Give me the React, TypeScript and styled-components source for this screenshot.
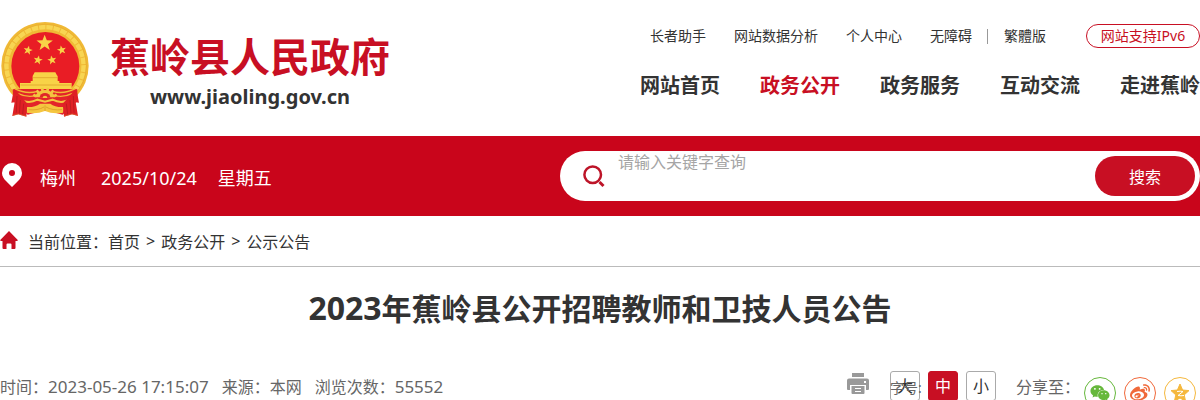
import React from "react";
import styled, { createGlobalStyle } from "styled-components";
import { FaWeibo, FaWeixin } from "react-icons/fa";

const RED = "#c80f23";

const GlobalStyle = createGlobalStyle`
  * { box-sizing: border-box; }
  html { scrollbar-width: none; }
  body {
    margin: 0;
    background: #fff;
    color: #333;
    font-family: "Noto Sans", "Noto Sans CJK SC", sans-serif;
    font-size: 16px;
  }
  a { color: inherit; text-decoration: none; }
  button, input { font-family: inherit; }
`;

const Header = styled.header`
  display: flex;
  justify-content: space-between;
  height: 136px;
`;

const Brand = styled.a`
  display: flex;
  gap: 21px;
  padding: 22px 0 0 1px;
`;

const BrandText = styled.div`
  display: flex;
  flex-direction: column;
  align-items: center;
  padding-top: 10px;
`;

const SiteName = styled.span`
  color: ${RED};
  font-size: 40px;
  font-weight: 700;
  line-height: 50px;
  white-space: nowrap;
`;

const Domain = styled.span`
  font-size: 20px;
  font-weight: 700;
  line-height: 30px;
`;

const Navs = styled.div`
  display: flex;
  flex-direction: column;
  align-items: flex-end;
  padding-top: 24px;
  white-space: nowrap;
`;

const TopNav = styled.nav`
  display: flex;
  align-items: center;
  font-size: 14px;
  line-height: 24px;
`;

const TopLink = styled.a<{ $gap?: number }>`
  margin-right: ${(p) => p.$gap ?? 28}px;
`;

const Divider = styled.span`
  width: 1px;
  height: 15px;
  margin-right: 16px;
  background: #999;
`;

const Ipv6 = styled.a`
  width: 114px;
  height: 24px;
  border: 1px solid ${RED};
  border-radius: 12px;
  color: ${RED};
  line-height: 22px;
  text-align: center;
`;

const MainNav = styled.nav`
  display: flex;
  gap: 40px;
  padding-top: 23px;
  font-size: 20px;
  font-weight: 700;
  line-height: 30px;
`;

const MainLink = styled.a<{ $active?: boolean }>`
  color: ${(p) => (p.$active ? RED : "#333")};
`;

const Band = styled.section`
  display: flex;
  align-items: center;
  justify-content: space-between;
  height: 80px;
  background: #c9051b;
  color: #fff;
`;

const Today = styled.div`
  display: flex;
  align-items: center;
  padding: 4px 0 0 2px;
  font-size: 18px;
  line-height: 28px;
  white-space: nowrap;

  svg { margin: 0 18px 6px 0; }
`;

const City = styled.span`
  margin-right: 25px;
`;

const Day = styled.time`
  margin-right: 21px;
`;

const Search = styled.form`
  display: flex;
  align-items: center;
  width: 640px;
  height: 50px;
  padding: 0 5px 0 22px;
  border-radius: 25px;
  background: #fff;
`;

const SearchInput = styled.input`
  flex: 1;
  height: 50px;
  min-width: 0;
  margin-left: 12px;
  padding: 0 0 28px;
  border: 0;
  outline: 0;
  background: transparent;
  font-size: 16px;
  line-height: 24px;
  &::placeholder { color: #a5a5a5; }
`;

const SearchButton = styled.button`
  width: 100px;
  height: 40px;
  border: 0;
  border-radius: 20px;
  background: ${RED};
  color: #fff;
  font-size: 16px;
`;

const Crumbs = styled.nav`
  display: flex;
  align-items: center;
  gap: 6px;
  height: 51px;
  border-bottom: 1px solid #bbb;
  white-space: nowrap;

  svg { margin: 0 4px 3px 0; }
`;

const CrumbLabel = styled.span`
  margin-right: -6px;
`;

const Title = styled.h1`
  margin: 0;
  padding-top: 19px;
  font-size: 30px;
  font-weight: 700;
  line-height: 44px;
  text-align: center;
`;

const Year = styled.span`
  font-size: 32px;
`;

const Info = styled.div`
  display: flex;
  justify-content: space-between;
  padding-top: 40px;
  color: #666;
  white-space: nowrap;
`;

const Facts = styled.div`
  display: flex;
  gap: 13px;
  padding-top: 4px;
  line-height: 24px;
`;

const Figure = styled.span`
  font-size: 17px;
`;

const Tools = styled.div`
  display: flex;
  align-items: flex-start;
`;

const PrintButton = styled.button`
  margin: 2px 21px 0 0;
  padding: 0;
  border: 0;
  background: none;
  line-height: 0;
`;

const Sizes = styled.div`
  position: relative;
  display: flex;
  gap: 8px;
  margin-right: 20px;
`;

const SizeLabel = styled.span`
  position: absolute;
  top: 7px;
  left: 0;
  font-size: 14px;
  line-height: 20px;
`;

const SizeButton = styled.button<{ $active?: boolean }>`
  width: 30px;
  height: 30px;
  padding: 0;
  border: 1px solid ${(p) => (p.$active ? RED : "#aaa")};
  border-radius: 3px;
  background: ${(p) => (p.$active ? RED : "#fff")};
  color: ${(p) => (p.$active ? "#fff" : "#333")};
  font-size: 16px;
  line-height: 28px;
`;

const ShareLabel = styled.span`
  padding-top: 4px;
  line-height: 24px;
`;

const Shares = styled.div`
  display: flex;
  gap: 8px;
  padding: 6px 4px 0 4px;
`;

const ShareLink = styled.a<{ $color: string }>`
  display: flex;
  align-items: center;
  justify-content: center;
  width: 32px;
  height: 32px;
  border: 1px solid ${(p) => p.$color};
  border-radius: 50%;
  color: ${(p) => p.$color};
`;

const STAR = "0,-10 2.6,-3.2 9.8,-3 4,1.4 6.1,8.4 0,4.3 -6.1,8.4 -4,1.4 -9.8,-3 -2.6,-3.2";

const Emblem = () => (
  <svg width="88" height="96" viewBox="3 36 264 288" aria-hidden="true">
    <circle cx="135" cy="167" r="131" fill="#f0b935" />
    <circle cx="135" cy="167" r="116" fill="none" stroke="#f8d552" strokeWidth="14" strokeDasharray="19 3" />
    <circle cx="135" cy="167" r="124" fill="none" stroke="#e5a92d" strokeWidth="2" />
    <circle cx="136" cy="168" r="102" fill="#e91d25" />
    <g fill="#f8d347">
      <polygon points={STAR} transform="translate(134 99) scale(2.5)" />
      <polygon points={STAR} transform="translate(84 121) scale(1.4) rotate(12)" />
      <polygon points={STAR} transform="translate(185 120) scale(1.4) rotate(-12)" />
      <polygon points={STAR} transform="translate(114 150) scale(1.4) rotate(12)" />
      <polygon points={STAR} transform="translate(156 150) scale(1.4) rotate(-12)" />
      <path d="M104 187h62l6 11h-74zM98 197h75v17H98zM92 213h86v8H92zM60 219h155v18H60z" />
    </g>
    <path d="M98 203h75M62 225h151" stroke="#d99b25" strokeWidth="2" />
    <path d="M38 238H232L232 274 188 314 135 300 83 314 40 274z" fill="#e3242a" />
    <path d="M44 236Q80 254 112 244M226 236Q190 254 158 244M52 250Q84 264 108 256M218 250Q188 264 163 256" fill="none" stroke="#f1b936" strokeWidth="4" />
    <path d="M106 262a29 22 0 0 1 58 0z" fill="#f3c540" />
    <path d="M108 259l-8-5M116 249l-6-8M128 243l-2-9M142 243l2-9M154 249l6-8M162 259l8-5" stroke="#f3c540" strokeWidth="8" />
    <path d="M119 262a16 13 0 0 1 32 0z" fill="#df2729" />
    <path d="M128 264a7 7 0 0 1 14 0z" fill="#f3c540" />
    <path d="M54 263Q82 285 112 269L135 275 158 269Q188 285 217 263" fill="none" stroke="#f3c540" strokeWidth="6" />
    <path d="M78 291Q104 293 120 281L151 281Q166 293 193 291L189 308Q160 314 135 303 108 314 80 308z" fill="#f5c640" />
    <path d="M86 299Q113 302 132 291M186 299Q157 302 138 291M135 286V303" fill="none" stroke="#d3921f" strokeWidth="2" />
    <path d="M42 236L34 278 44 277 37 318 55 313 79 320 82 281 60 255zM229 236L237 278 227 277 234 318 216 313 192 320 188 281 211 255z" fill="#df2025" />
    <path d="M51 258L49 308M61 270L58 311M71 281L68 314M220 258L222 308M210 270L213 311M199 281L203 314" stroke="#ae1a1b" strokeWidth="2" />
    <path d="M37 316L55 312 79 318M234 316L216 312 192 318" fill="none" stroke="#d8642a" strokeWidth="2" />
  </svg>
);

const PinIcon = () => (
  <svg width="20" height="24" viewBox="0 0 20 24" aria-hidden="true">
    <path fill="#fff" fillRule="evenodd" d="M10 0a10 10 0 0 0-10 10c0 3.500 2 6 4 8l6 6 6-6c2-2 4-4.500 4-8A10 10 0 0 0 10 0zm0 7a3 3 0 1 1 0 6 3 3 0 0 1 0-6z" />
  </svg>
);

const SearchIcon = () => (
  <svg width="24" height="24" viewBox="0 0 24 24" fill="none" stroke="#bd1428" strokeWidth="2.500" aria-hidden="true">
    <circle cx="10.700" cy="10.700" r="8.300" />
    <path d="M17.500 18l4 4" strokeWidth="3" />
  </svg>
);

const HomeIcon = () => (
  <svg width="18" height="18" viewBox="0 0 18 18" aria-hidden="true">
    <path fill={RED} d="M9 0L18 9.200 17 10H15.500V17q0 1-1 1H11.500V13.500q0-1-1-1h-3q-1 0-1 1V18H3.500q-1 0-1-1V10H1L0 9.200z" />
  </svg>
);

const PrintIcon = () => (
  <svg width="22" height="22" viewBox="0 0 22 22" fill="#999" aria-hidden="true">
    <path d="M5 0h12v4H5zM2 5.500h18q2 0 2 2V16q0 1-1 1h-2v-5H3v5H1q-1 0-1-1V7.500q0-2 2-2z" />
    <path fill="#fff" d="M17 8h2v2h-2z" />
    <path fillRule="evenodd" d="M4.500 13h13v7q0 1-1 1h-11q-1 0-1-1zM8 15v1h6v-1zm0 3v1h6v-1z" />
  </svg>
);

const QzoneIcon = () => (
  <svg width="20" height="20" viewBox="0 0 20 20" aria-hidden="true">
    <path fill="currentColor" stroke="currentColor" strokeLinejoin="round" d="M10 1l2.600 6 6.400.600-4.800 4.300 1.400 6.300L10 15l-5.600 3.200 1.400-6.300L1 7.600 7.400 7z" />
    <path fill="none" stroke="#fff" strokeWidth="1" d="M7 8.500q3.500-.600 6 0l-5 4q3 .600 6 0" />
  </svg>
);

const MENU = ["网站首页", "政务公开", "政务服务", "互动交流", "走进蕉岭"];

export default function App() {
  return (
    <>
      <GlobalStyle />
      <Header>
        <Brand href="#">
          <Emblem />
          <BrandText>
            <SiteName>蕉岭县人民政府</SiteName>
            <Domain>www.jiaoling.gov.cn</Domain>
          </BrandText>
        </Brand>
        <Navs>
          <TopNav>
            <TopLink href="#">长者助手</TopLink>
            <TopLink href="#">网站数据分析</TopLink>
            <TopLink href="#">个人中心</TopLink>
            <TopLink href="#" $gap={15}>无障碍</TopLink>
            <Divider />
            <TopLink href="#" $gap={40} lang="zh-Hant">繁體版</TopLink>
            <Ipv6 href="#">网站支持IPv6</Ipv6>
          </TopNav>
          <MainNav>
            {MENU.map((item) => (
              <MainLink key={item} href="#" $active={item === "政务公开"}>{item}</MainLink>
            ))}
          </MainNav>
        </Navs>
      </Header>
      <Band>
        <Today>
          <PinIcon />
          <City>梅州</City>
          <Day>2025/10/24</Day>
          <span>星期五</span>
        </Today>
        <Search>
          <SearchIcon />
          <SearchInput type="text" aria-label="搜索关键字" placeholder="请输入关键字查询" />
          <SearchButton type="button">搜索</SearchButton>
        </Search>
      </Band>
      <Crumbs>
        <HomeIcon />
        <CrumbLabel>当前位置：</CrumbLabel>
        <a href="#">首页</a>
        <span>&gt;</span>
        <a href="#">政务公开</a>
        <span>&gt;</span>
        <a href="#">公示公告</a>
      </Crumbs>
      <main>
        <Title><Year>2023</Year>年蕉岭县公开招聘教师和卫技人员公告</Title>
        <Info>
          <Facts>
            <span>时间：<Figure>2023-05-26 17:15:07</Figure></span>
            <span>来源：本网</span>
            <span>浏览次数：<Figure>55552</Figure></span>
          </Facts>
          <Tools>
            <PrintButton type="button" aria-label="打印"><PrintIcon /></PrintButton>
            <Sizes>
              <SizeButton type="button">大</SizeButton>
              <SizeButton type="button" $active>中</SizeButton>
              <SizeButton type="button">小</SizeButton>
              <SizeLabel>字号:</SizeLabel>
            </Sizes>
            <ShareLabel>分享至：</ShareLabel>
            <Shares>
              <ShareLink href="#" aria-label="微信" $color="#66b83c"><FaWeixin size={20} /></ShareLink>
              <ShareLink href="#" aria-label="微博" $color="#f0693a"><FaWeibo size={20} /></ShareLink>
              <ShareLink href="#" aria-label="QQ空间" $color="#f5b83d"><QzoneIcon /></ShareLink>
            </Shares>
          </Tools>
        </Info>
      </main>
    </>
  );
}
